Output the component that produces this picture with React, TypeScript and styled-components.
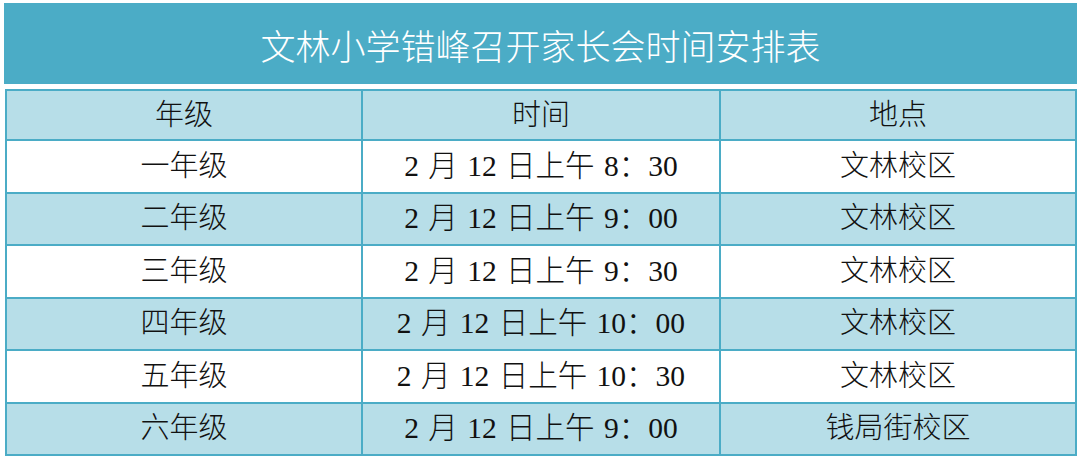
import styled, { createGlobalStyle } from "styled-components";

const GlobalStyle = createGlobalStyle`
  html, body {
    margin: 0;
    padding: 0;
    background: #ffffff;
  }
  body {
    font-family: "Liberation Serif", "Noto Sans CJK SC", serif;
    color: #000000;
  }
`;

const Page = styled.div`
  width: 1080px;
  height: 459px;
  box-sizing: border-box;
  padding: 3px 3px 0 4px;
  overflow: hidden;
`;

const TitleBar = styled.div`
  height: 81px;
  background: #4bacc6;
  color: #ffffff;
  display: flex;
  align-items: center;
  justify-content: center;
  font-size: 35px;
  font-weight: 300;
  padding-top: 2px;
  box-sizing: border-box;
`;

const Table = styled.table`
  margin-top: 5px;
  margin-left: 1px;
  width: 1072px;
  border-collapse: collapse;
  table-layout: fixed;
`;

const Row = styled.tr<{ $shaded?: boolean }>`
  background: ${(p) => (p.$shaded ? "#b7dee8" : "#ffffff")};
`;

const Cell = styled.td<{ $head?: boolean }>`
  border: 2px solid #4bacc6;
  height: ${(p) => (p.$head ? "48px" : "50.5px")};
  padding: 0;
  text-align: center;
  vertical-align: middle;
  font-size: 29px;
  font-weight: 300;
  line-height: 1;
  white-space: pre;
  color: #111111;
`;

const TimeCell = styled(Cell)`
  word-spacing: 2px;
  font-size: 29.5px;
`;

const rows = [
  ["一年级", "2 月 12 日上午 8：30", "文林校区"],
  ["二年级", "2 月 12 日上午 9：00", "文林校区"],
  ["三年级", "2 月 12 日上午 9：30", "文林校区"],
  ["四年级", "2 月 12 日上午 10：00", "文林校区"],
  ["五年级", "2 月 12 日上午 10：30", "文林校区"],
  ["六年级", "2 月 12 日上午 9：00", "钱局街校区"],
];

const App = () => {
  return (
    <Page>
      <GlobalStyle />
      <TitleBar>文林小学错峰召开家长会时间安排表</TitleBar>
      <Table>
        <colgroup>
          <col style={{ width: "356px" }} />
          <col style={{ width: "358px" }} />
          <col />
        </colgroup>
        <tbody>
          <Row $shaded>
            <Cell $head>年级</Cell>
            <Cell $head>时间</Cell>
            <Cell $head>地点</Cell>
          </Row>
          {rows.map((r, i) => (
            <Row key={r[0]} $shaded={i % 2 === 1}>
              <Cell>{r[0]}</Cell>
              <TimeCell>{r[1]}</TimeCell>
              <Cell>{r[2]}</Cell>
            </Row>
          ))}
        </tbody>
      </Table>
    </Page>
  );
};

export default App;
